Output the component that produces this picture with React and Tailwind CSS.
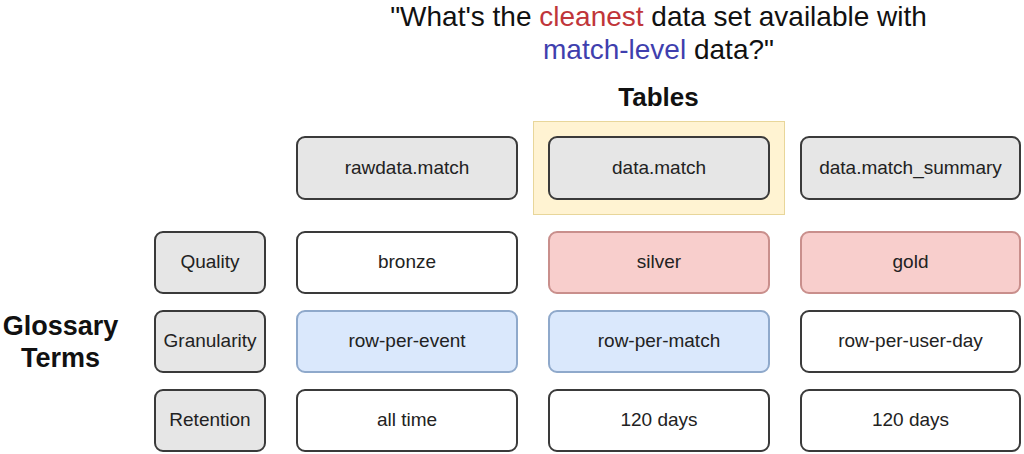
const cols = "grid grid-cols-[124px_112px_222px_222px_221px] gap-x-[30px]";

const tones = {
  white: "bg-white border-[#3a3a3a]",
  gray: "bg-[#e6e6e6] border-[#3a3a3a]",
  red: "bg-[#f8cecc] border-[#c98f8c]",
  blue: "bg-[#dae8fc] border-[#8fa9cb]",
};

const Box = ({ tone = "white", children, className = "" }) => (
  <div
    className={`flex items-center justify-center rounded-[9px] border-2 text-[19px] text-[#222] ${tones[tone]} ${className}`}
  >
    {children}
  </div>
);

const rows = [
  {
    label: "Quality",
    cells: [
      ["white", "bronze"],
      ["red", "silver"],
      ["red", "gold"],
    ],
  },
  {
    label: "Granularity",
    cells: [
      ["blue", "row-per-event"],
      ["blue", "row-per-match"],
      ["white", "row-per-user-day"],
    ],
  },
  {
    label: "Retention",
    cells: [
      ["white", "all time"],
      ["white", "120 days"],
      ["white", "120 days"],
    ],
  },
];

export default function App() {
  return (
    <div className="w-[1024px] h-[454px] bg-white overflow-hidden font-['Liberation_Sans',Arial,sans-serif] text-[#111]">
      {/* question + heading */}
      <div className={cols}>
        <div className="col-start-3 col-span-3 flex flex-col items-center">
          <p className="text-[28px] leading-[33px] text-center whitespace-nowrap">
            "What's the <span className="text-[#c0353a]">cleanest</span> data set available with
            <br />
            <span className="text-[#3f3fae]">match-level</span> data?"
          </p>
          <h2 className="mt-[16px] text-[26px] leading-[30px] font-bold">Tables</h2>
        </div>
      </div>

      {/* table names */}
      <div className={`${cols} mt-[9px] h-[94px]`}>
        <Box tone="gray" className="col-start-3 my-[15px]">rawdata.match</Box>
        <div className="-mx-[15px] bg-[#fff3d2] border border-[#e8d69a] p-[14px] flex">
          <Box tone="gray" className="flex-1">data.match</Box>
        </div>
        <Box tone="gray" className="my-[15px]">data.match_summary</Box>
      </div>

      {/* glossary rows */}
      <div className={`${cols} mt-[16px] grid-rows-[63px_63px_63px] gap-y-[16px]`}>
        <div className="row-span-3 flex items-center justify-center -ml-[3px]">
          <p className="text-[27px] leading-[32px] font-bold text-center">
            Glossary
            <br />
            Terms
          </p>
        </div>
        {rows.map((r) => (
          <div key={r.label} className="contents">
            <Box tone="gray" className="col-start-2">{r.label}</Box>
            {r.cells.map(([tone, text], i) => (
              <Box key={i} tone={tone}>{text}</Box>
            ))}
          </div>
        ))}
      </div>
    </div>
  );
}
